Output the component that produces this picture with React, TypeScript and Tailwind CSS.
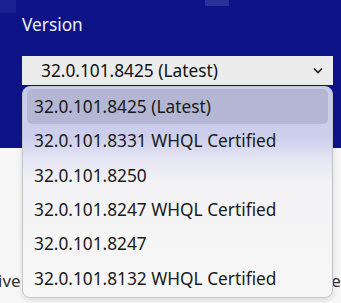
import React from "react";

const versions = [
  "32.0.101.8425 (Latest)",
  "32.0.101.8331 WHQL Certified",
  "32.0.101.8250",
  "32.0.101.8247 WHQL Certified",
  "32.0.101.8247",
  "32.0.101.8132 WHQL Certified",
];

export default function App() {
  return (
    <div
      className="relative w-[341px] h-[303px] overflow-hidden bg-[#f7f7f7]"
      style={{ fontFamily: '"Noto Sans", "Open Sans", sans-serif' }}
    >
      {/* header band */}
      <div className="relative h-[148px] bg-[#0e1487] px-[22px] pt-[12px]">
        <div className="absolute left-0 top-0 w-[16px] h-[13px] bg-[#1a2090]" />
        <div className="absolute left-[205px] top-0 w-[24px] h-[6px] bg-[#2a309a]" />
        <div className="text-[17.3px] leading-[26px] text-[#eef0ff]">Version</div>
        <div className="mt-[18px] h-[29px] w-[311px] bg-[#ececec] flex items-center pl-[19px] pr-[10px] text-[17.3px] text-[#111]">
          <span className="flex-1">32.0.101.8425 (Latest)</span>
          <svg width="10" height="7" viewBox="0 0 10 7" fill="none">
            <path d="M1 1.5 L5 5.5 L9 1.5" stroke="#222" strokeWidth="1.6" />
          </svg>
        </div>
      </div>

      {/* page text behind the menu */}
      <div className="pt-[120px] text-[17px] leading-[26px] text-[#333] whitespace-nowrap">
        <div className="flex justify-between">
          <span className="-ml-[2px]">ive</span>
          <span className="-mr-[8px]">es</span>
        </div>
        <div className="pl-[20px] mt-[4px]">Intel® Core™ Ultra Processors with Intel® Arc</div>
      </div>

      {/* open dropdown */}
      <div className="absolute left-[22px] top-[86px] w-[311px] h-[212px] rounded-[8px] border border-[#c4c4c8] bg-[linear-gradient(to_bottom,#c9cbec_0px,#ccceec_50px,#e4e5f3_72px,#f3f3f5_95px,#f7f7f7_100%)] shadow-[0_2px_6px_rgba(0,0,0,0.12)] px-[4px] pt-[2px]">
        {versions.map((v, i) => (
          <div
            key={i}
            className={
              i === 0
                ? "h-[35px] rounded-[5px] bg-[#b4b7d3] flex items-center pl-[7px] text-[17.3px] text-[#1a1a1a]"
                : "h-[34.4px] flex items-center pl-[7px] text-[17.3px] text-[#1a1a1a]"
            }
          >
            {v}
          </div>
        ))}
      </div>
    </div>
  );
}
